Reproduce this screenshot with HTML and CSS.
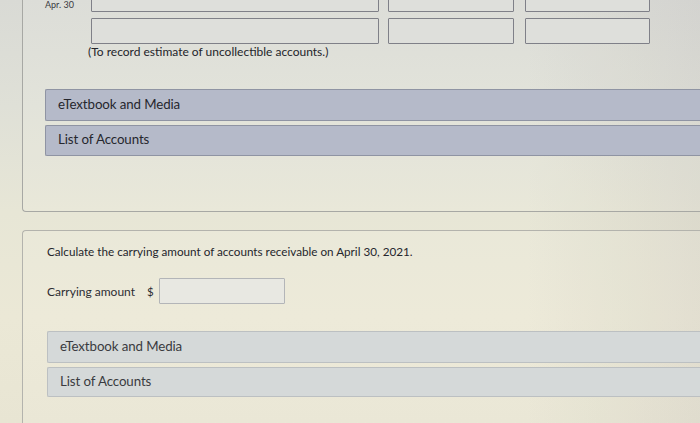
FILE: index.html
```html
<!DOCTYPE html>
<html lang="en">
<head>
<meta charset="utf-8">
<link rel="stylesheet" href="styles.css">
<title>Accounts receivable</title>
</head>
<body>
<div class="page">
  <section class="card card-top">
    <div class="journal">
      <div class="jrow">
        <span class="jdate">Apr. 30</span>
        <span class="field f-acct"></span>
        <span class="field f-amt"></span>
        <span class="field f-amt2"></span>
      </div>
      <div class="jrow">
        <span class="jdate"></span>
        <span class="field f-acct"></span>
        <span class="field f-amt"></span>
        <span class="field f-amt2"></span>
      </div>
      <p class="note">(To record estimate of uncollectible accounts.)</p>
    </div>
    <div class="bars bars-blue">
      <div class="bar">eTextbook and Media</div>
      <div class="bar">List of Accounts</div>
    </div>
  </section>

  <section class="card card-bottom">
    <p class="question">Calculate the carrying amount of accounts receivable on April 30, 2021.</p>
    <div class="answer">
      <span class="answer-label">Carrying amount</span>
      <span class="currency">$</span>
      <span class="field f-carry"></span>
    </div>
    <div class="bars bars-gray">
      <div class="bar">eTextbook and Media</div>
      <div class="bar">List of Accounts</div>
    </div>
  </section>
</div>
</body>
</html>
```

FILE: styles.css
```css
html, body {
  margin: 0;
  height: 100%;
  overflow: hidden;
}
body {
  font-family: Lato, "Open Sans", sans-serif;
  color: #2b2c33;
  background:
    linear-gradient(90deg, rgba(0,0,0,0) 75%, rgba(120,110,120,0.10) 100%),
    linear-gradient(180deg, #d9dad5 0%, #dfe0d7 25%, #e7e6d6 50%, #ebe8d6 75%, #e8e5d3 100%);
}
.page {
  margin-top: -14px;
  padding-left: 22px;
}
.card {
  border: 1px solid #a7a8a4;
  border-right: none;
  margin-right: -10px;
  background: rgba(255,255,250,0.10);
}
.card-top {
  border-top: none;
  border-radius: 0 0 0 4px;
  padding: 0 0 55px 22px;
}
.card-bottom {
  margin-top: 18px;
  border-bottom: none;
  border-radius: 4px 0 0 0;
  padding: 13px 0 40px 24px;
  border-color: #b3b3ad;
}
.journal {
  padding-bottom: 30px;
}
.jrow {
  display: flex;
  align-items: flex-end;
  height: 26px;
  margin-bottom: 6px;
}
.jrow:nth-child(2) { margin-bottom: 1px; }
.jdate {
  width: 46px;
  font-size: 9px;
  line-height: 10px;
  color: #3a3a40;
  padding-bottom: 2px;
}
.field {
  display: block;
  box-sizing: border-box;
  height: 26px;
  border: 1.5px solid #7f8088;
  border-radius: 1px;
  background: #dedfdb;
}
.f-acct { width: 288px; }
.f-amt { width: 126px; margin-left: 9px; }
.f-amt2 { width: 125px; margin-left: 11px; }
.note {
  margin: 0 0 0 43px;
  font-size: 12px;
  line-height: 14px;
  color: #23242a;
}
.bars {
  display: flex;
  flex-direction: column;
  gap: 4px;
}
.bar {
  box-sizing: border-box;
  height: 32px;
  display: flex;
  align-items: center;
  padding-left: 12px;
  padding-bottom: 3px;
  font-size: 13.3px;
  letter-spacing: -0.1px;
  border-radius: 2px 0 0 2px;
}
.bars-blue .bar {
  background: #b5bac9;
  border: 1px solid #8f94a3;
  border-right: none;
  color: #26272e;
}
.bars-blue .bar:last-child { height: 31px; }
.bars-gray .bar {
  background: #d5d9d9;
  border: 1px solid #bcc0c2;
  border-right: none;
  color: #3a3b40;
}
.bars-gray .bar:last-child { height: 30px; }
.question {
  margin: 0;
  font-size: 11.7px;
  line-height: 14px;
  color: #25262c;
}
.answer {
  display: flex;
  align-items: center;
  margin-top: 20px;
  height: 26px;
  margin-bottom: 27px;
}
.answer-label {
  font-size: 12px;
  color: #2c2d33;
}
.currency {
  font-size: 11.5px;
  margin-left: 12px;
  width: 12px;
  color: #2c2d33;
}
.f-carry {
  width: 126px;
  border: 1px solid #b3b5b8;
  background: #e8e8e2;
}
```
